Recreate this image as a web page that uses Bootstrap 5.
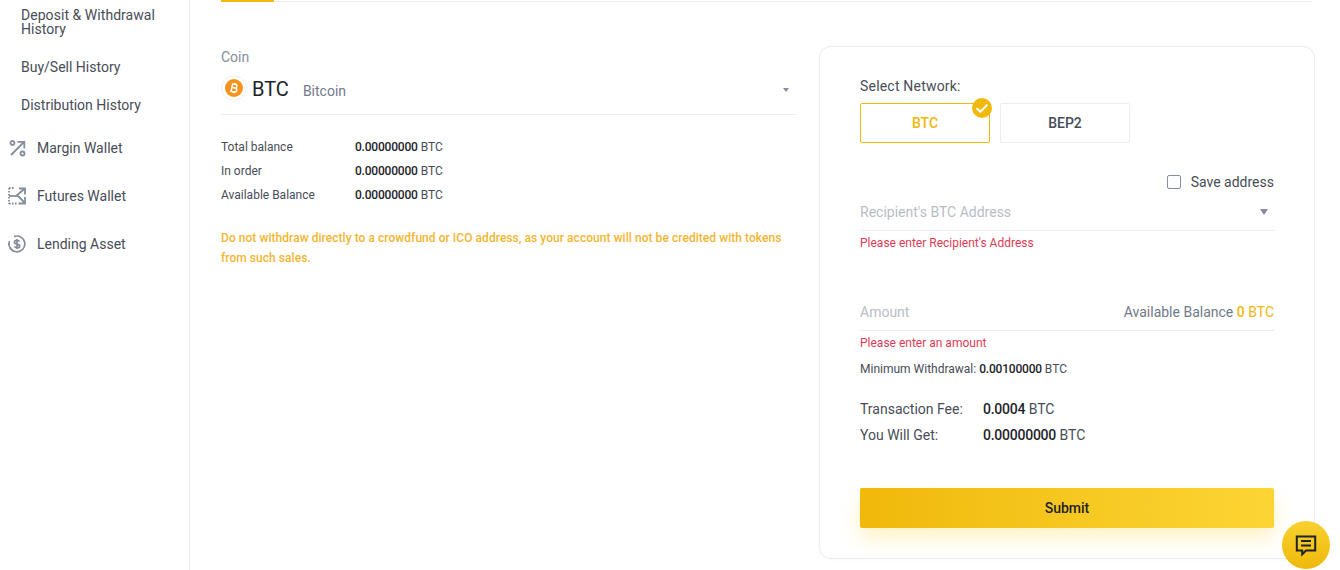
<!DOCTYPE html>
<html lang="en">
<head>
<meta charset="utf-8">
<title>Withdraw</title>
<link href="https://cdn.jsdelivr.net/npm/bootstrap@5.3.0/dist/css/bootstrap.min.css" rel="stylesheet">
<style>
html,body{height:570px;overflow:hidden;background:#fff}
body{font-family:Roboto,"Liberation Sans",sans-serif;color:#474d57;font-size:14px;line-height:1.2}
.app-shell{height:570px;overflow:hidden}
.side-rail{width:190px;flex:none;border-right:1px solid #eaecef;height:570px}
.side-sub{display:block;padding-left:21px;color:#474d57;text-decoration:none;font-size:14px;line-height:14px}
.side-sub.s1{margin-top:8px;width:165px;letter-spacing:.05px}
.side-sub.s2{margin-top:24px}
.side-sub.s3{margin-top:24px}
.side-main{display:flex;align-items:center;padding-left:8px;color:#474d57;text-decoration:none;font-size:14px;height:20px}
.side-main svg{width:18px;height:18px;flex:none;margin-right:11px}
.side-main.m1{margin-top:26px}
.side-main.m2,.side-main.m3{margin-top:28px}
.main-pane{flex:1;padding-left:31px;padding-right:25px;min-width:0}
.tab-line{height:2px;border-bottom:1px solid #eaecef;width:1091px}
.tab-line i{display:block;width:53px;height:2px;background:#f0b90b}
.form-grid{display:flex;gap:22px;margin-top:44px}
.coin-col{width:576px;flex:none;padding-top:4px}
.coin-lbl{color:#848e9c;font-size:14px;line-height:14px}
.coin-pick{display:flex;align-items:center;margin-top:5px;padding-bottom:7px;border-bottom:1px solid #eaecef;height:46px;padding-right:8px}
.coin-logo{width:26px;height:26px;border-radius:50%;border:1px solid #f0f0f0;display:flex;align-items:center;justify-content:center;margin-right:5px}
.coin-code{font-size:20px;color:#1e2329;margin-right:14px;line-height:24px;margin-top:2px}
.coin-name{color:#707a8a;font-size:14px;margin-top:7px}
.tri-down{width:0;height:0;border-left:3px solid transparent;border-right:3px solid transparent;border-top:4px solid #848e9c;margin-left:auto;margin-top:4px}
.bal-list{margin-top:25px}
.bal-row{display:flex;font-size:12px;line-height:14px;margin-bottom:10px}
.bal-row span:first-child{width:134px;color:#474d57}
.bal-row b,.min-row b{font-weight:500;color:#1e2329;letter-spacing:-.2px}
.fee-row b{font-weight:500;color:#1e2329;letter-spacing:-.25px}
.warn-text{color:#f3b531;font-size:12px;font-weight:500;line-height:20px;margin-top:26px;margin-bottom:0;letter-spacing:.05px}
.wd-panel{width:496px;flex:none;height:513px;border:1px solid #eaecef;border-radius:12px;padding:31px 40px 0;box-shadow:0 0 4px rgba(0,0,0,.03)}
.net-lbl{line-height:16px;font-size:14px;letter-spacing:.2px}
.net-row{display:flex;gap:10px;margin-top:9px}
.net-opt{width:130px;height:40px;border:1px solid #eaecef;border-radius:2px;display:flex;align-items:center;justify-content:center;font-weight:500;font-size:14px;position:relative;color:#474d57}
.net-opt.on{border-color:#f0b90b;color:#f0b90b}
.net-check{position:absolute;top:-6px;right:-3px;width:20px;height:20px}
.save-row{display:flex;justify-content:flex-end;align-items:center;margin-top:31px;height:16px}
.box-sq{width:14px;height:14px;border:1px solid #848e9c;border-radius:2px;margin-right:10px}
.input-line{display:flex;justify-content:space-between;align-items:center;border-bottom:1px solid #eaecef;color:#b7bdc6;font-size:14px}
.input-line.addr{margin-top:12px;height:29px;padding-bottom:8px}
.input-line.amt{margin-top:53px;height:28px;padding-bottom:8px}
.tri-bold{width:0;height:0;border-left:4px solid transparent;border-right:4px solid transparent;border-top:6px solid #848e9c;margin-right:6px}
.err-msg{color:#e23a56;font-size:12px;line-height:14px;margin-top:5px}
.avail-txt{color:#707a8a}
.avail-txt em{font-style:normal;color:#f0b90b}
.avail-txt em b{font-weight:500}
.min-row{font-size:12px;line-height:14px;margin-top:12px}
.fee-row{display:flex;font-size:14px;line-height:16px}
.fee-row span:first-child{width:123px}
.fee-row.f1{margin-top:25px}
.fee-row.f2{margin-top:10px}
.go-btn{display:block;width:100%;height:40px;margin-top:45px;border:0;border-radius:2px;font-weight:500;font-size:14px;color:#1e2329;background:linear-gradient(90deg,#f0b90b,#fcd535);box-shadow:0 10px 20px rgba(252,213,53,.3)}
.chat-fab{position:fixed;left:1282px;top:521px;width:48px;height:48px;border-radius:50%;background:linear-gradient(180deg,#f8d12f,#f0b90b);display:flex;align-items:center;justify-content:center}
</style>
</head>
<body>
<div class="app-shell d-flex">
  <nav class="side-rail">
    <a class="side-sub s1" href="#">Deposit &amp; Withdrawal History</a>
    <a class="side-sub s2" href="#">Buy/Sell History</a>
    <a class="side-sub s3" href="#">Distribution History</a>
    <a class="side-main m1" href="#">
      <svg viewBox="0 0 18 18" fill="none" stroke="#848e9c" stroke-width="1.8"><circle cx="4.5" cy="4" r="2"/><circle cx="14.5" cy="14.5" r="2"/><path d="M3 16 15.5 3.5M9.5 2.8h6.8v6.8"/></svg>
      <span>Margin Wallet</span>
    </a>
    <a class="side-main m2" href="#">
      <svg viewBox="0 0 18 18" fill="none" stroke="#848e9c" stroke-width="1.8"><path d="M1 1v16M1 1h5M1 16.5h9" stroke-dasharray="1.6 1.4"/><path d="M1 9h9"/><path d="M8 9 16 2.2M11 1.5h6v6M10 9l6.5 6.5M17 10v6.5h-6.5"/></svg>
      <span>Futures Wallet</span>
    </a>
    <a class="side-main m3" href="#">
      <svg viewBox="0 0 18 18" fill="none" stroke="#848e9c" stroke-width="1.7"><path d="M6 1.6A7.9 7.9 0 1 1 1.6 6"/><path d="M1 8.5v2M2 12.5l.9 1.5M4 15l1 .8" stroke-dasharray="1.4 1.2"/><path d="M11.6 6.6c-.5-.8-1.4-1.2-2.6-1.2-1.5 0-2.6.7-2.6 1.8 0 2.6 5.3 1.2 5.3 3.7 0 1.1-1.2 1.8-2.7 1.8-1.2 0-2.2-.5-2.7-1.3M9 4v10"/></svg>
      <span>Lending Asset</span>
    </a>
  </nav>
  <main class="main-pane">
    <div class="tab-line"><i></i></div>
    <div class="form-grid">
      <section class="coin-col">
        <div class="coin-lbl">Coin</div>
        <div class="coin-pick">
          <span class="coin-logo">
            <svg width="18" height="18" viewBox="0 0 18 18"><circle cx="9" cy="9" r="9" fill="#f7931a"/><g transform="rotate(12 9 9)"><path d="M6.8 5v8M6.8 5.2h3c2.4 0 2.4 3.6 0 3.6h-3M6.8 8.8h3.4c2.6 0 2.6 4-0 4H5.8M8.4 3.8v1.4M10 3.8v1.4M8.4 12.8v1.4M10 12.8v1.4" fill="none" stroke="#fff" stroke-width="1.4"/></g></svg>
          </span>
          <span class="coin-code">BTC</span>
          <span class="coin-name">Bitcoin</span>
          <span class="tri-down"></span>
        </div>
        <div class="bal-list">
          <div class="bal-row"><span>Total balance</span><span><b>0.00000000</b> BTC</span></div>
          <div class="bal-row"><span>In order</span><span><b>0.00000000</b> BTC</span></div>
          <div class="bal-row"><span>Available Balance</span><span><b>0.00000000</b> BTC</span></div>
        </div>
        <p class="warn-text">Do not withdraw directly to a crowdfund or ICO address, as your account will not be credited with tokens from such sales.</p>
      </section>
      <section class="wd-panel">
        <div class="net-lbl">Select Network:</div>
        <div class="net-row">
          <div class="net-opt on">BTC
            <svg class="net-check" viewBox="0 0 20 20"><circle cx="10" cy="10" r="10" fill="#f0b90b"/><path d="M4.6 10.2l3.8 3.6L15.4 6.6" fill="none" stroke="#fff" stroke-width="2"/></svg>
          </div>
          <div class="net-opt">BEP2</div>
        </div>
        <div class="save-row"><span class="box-sq"></span><span>Save address</span></div>
        <div class="input-line addr"><span>Recipient's BTC Address</span><span class="tri-bold"></span></div>
        <div class="err-msg">Please enter Recipient's Address</div>
        <div class="input-line amt"><span>Amount</span><span class="avail-txt">Available Balance <em><b>0</b> BTC</em></span></div>
        <div class="err-msg">Please enter an amount</div>
        <div class="min-row">Minimum Withdrawal: <b>0.00100000</b> BTC</div>
        <div class="fee-row f1"><span>Transaction Fee:</span><span><b>0.0004</b> BTC</span></div>
        <div class="fee-row f2"><span>You Will Get:</span><span><b>0.00000000</b> BTC</span></div>
        <button type="button" class="btn go-btn">Submit</button>
      </section>
    </div>
  </main>
</div>
<div class="chat-fab">
  <svg width="24" height="24" viewBox="0 0 24 24"><path d="M2.8 3.5h18.4v14H12l-3.8 3.8V17.5H2.8z" fill="none" stroke="#1e2329" stroke-width="2"/><path d="M7 8h10M7 12.5h10" stroke="#1e2329" stroke-width="2"/></svg>
</div>
<script src="https://cdn.jsdelivr.net/npm/bootstrap@5.3.0/dist/js/bootstrap.bundle.min.js"></script>
</body>
</html>
